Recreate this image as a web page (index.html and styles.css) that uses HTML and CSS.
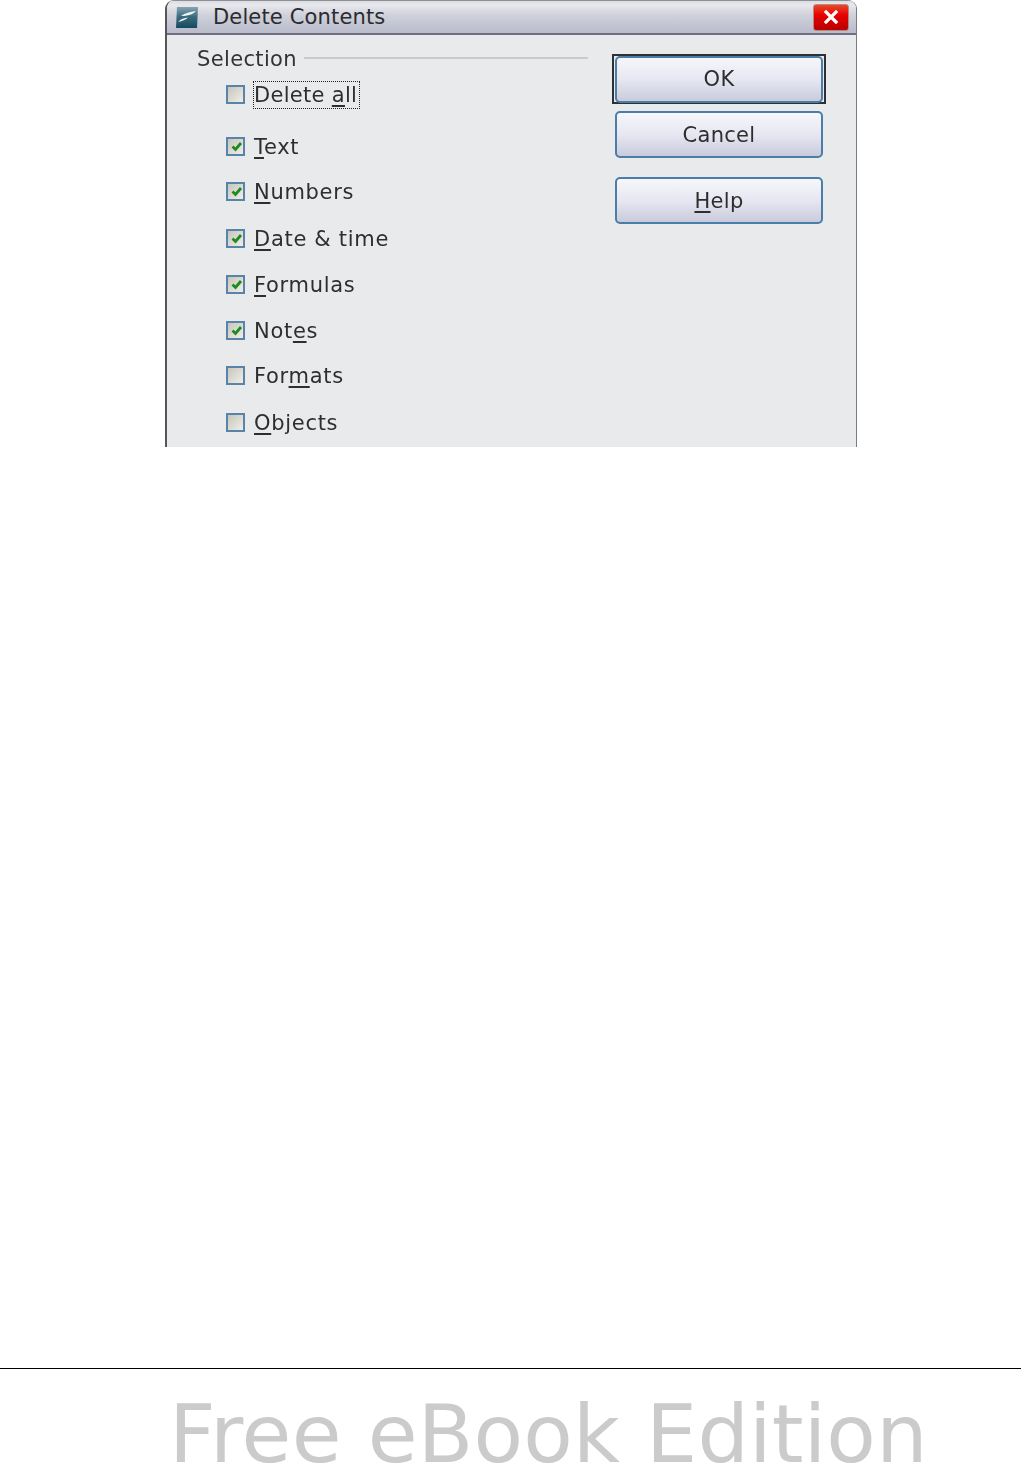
FILE: index.html
```html
<!DOCTYPE html>
<html lang="en">
<head>
<meta charset="utf-8">
<title>Delete Contents</title>
<link rel="stylesheet" href="styles.css">
</head>
<body>
<div class="page">
  <section class="dialog">
    <header class="titlebar">
      <svg class="app-icon" width="24" height="24" viewBox="0 0 24 24">
        <defs><linearGradient id="ai" x1="0" y1="0" x2="0" y2="1"><stop offset="0" stop-color="#8aa3b0"/><stop offset="0.45" stop-color="#3a6c80"/><stop offset="1" stop-color="#154a5e"/></linearGradient></defs>
        <path d="M2 2 H23 L22 23 H1 Z" fill="url(#ai)"/>
        <path d="M6 11 C10 8 15 7 21 6 C18 9 15 10 12 10.5 C10 11 8 11 6 11 Z" fill="#eef3f5"/>
        <path d="M3 17 C6 14 9 13 13 12.5 C11 15 7 16 3 17 Z" fill="#eef3f5"/>
      </svg>
      <h1 class="title">Delete Contents</h1>
      <button class="close" type="button" aria-label="Close">
        <svg width="16" height="16" viewBox="0 0 16 16"><path d="M3 3 L13 13 M13 3 L3 13" stroke="#fff" stroke-width="3.2" stroke-linecap="square"/></svg>
      </button>
    </header>
    <div class="content">
      <div class="options">
        <div class="legend"><span class="legend-text">Selection</span><span class="legend-rule"></span></div>
        <ul class="checks">
          <li class="check first"><span class="box"></span><span class="label focused">Delete <u>a</u>ll</span></li>
          <li class="check"><span class="box on"><svg width="14" height="14" viewBox="0 0 14 14"><path d="M3.5 7.5 L6.5 10.5 L12 4" fill="none" stroke="#1f8a1f" stroke-width="2.8"/></svg></span><span class="label"><u>T</u>ext</span></li>
          <li class="check up"><span class="box on"><svg width="14" height="14" viewBox="0 0 14 14"><path d="M3.5 7.5 L6.5 10.5 L12 4" fill="none" stroke="#1f8a1f" stroke-width="2.8"/></svg></span><span class="label"><u>N</u>umbers</span></li>
          <li class="check"><span class="box on"><svg width="14" height="14" viewBox="0 0 14 14"><path d="M3.5 7.5 L6.5 10.5 L12 4" fill="none" stroke="#1f8a1f" stroke-width="2.8"/></svg></span><span class="label"><u>D</u>ate &amp; time</span></li>
          <li class="check"><span class="box on"><svg width="14" height="14" viewBox="0 0 14 14"><path d="M3.5 7.5 L6.5 10.5 L12 4" fill="none" stroke="#1f8a1f" stroke-width="2.8"/></svg></span><span class="label"><u>F</u>ormulas</span></li>
          <li class="check"><span class="box on"><svg width="14" height="14" viewBox="0 0 14 14"><path d="M3.5 7.5 L6.5 10.5 L12 4" fill="none" stroke="#1f8a1f" stroke-width="2.8"/></svg></span><span class="label">Not<u>e</u>s</span></li>
          <li class="check up"><span class="box"></span><span class="label">For<u>m</u>ats</span></li>
          <li class="check"><span class="box"></span><span class="label"><u>O</u>bjects</span></li>
        </ul>
      </div>
      <div class="actions">
        <div class="default-ring"><button class="btn ok" type="button">OK</button></div>
        <button class="btn cancel" type="button">Cancel</button>
        <button class="btn help" type="button"><u>H</u>elp</button>
      </div>
    </div>
  </section>
  <footer class="footer">
    <p class="edition">Free eBook Edition</p>
  </footer>
</div>
</body>
</html>
```
FILE: styles.css
```css
html, body { margin: 0; padding: 0; background: #fff; }
body { font-family: "DejaVu Sans", sans-serif; color: #2e2e2e; overflow: hidden; }
.page { height: 1467px; display: flex; flex-direction: column; }

.dialog {
  box-sizing: border-box;
  width: 692px;
  height: 447px;
  margin-left: 165px;
  background: #e9eaec;
  border-left: 2px solid #55565c;
  border-right: 1px solid #7a7b80;
  border-radius: 9px 9px 0 0;
  overflow: hidden;
  display: flex;
  flex-direction: column;
  filter: blur(0.45px);
}
.titlebar {
  box-sizing: border-box;
  height: 35px;
  flex: none;
  display: flex;
  align-items: center;
  padding: 0 7px 0 8px;
  background: linear-gradient(#dcdde3 0, #e8e9ed 4px, #cfd1db 14px, #b9bbcc 100%);
  border-top: 1px solid #8f9096;
  border-bottom: 2px solid #6d6e7e;
}
.app-icon { flex: none; }
.title { margin: 0 0 0 14px; flex: 1; font-size: 21px; font-weight: 400; color: #2b2b2e; letter-spacing: 0.15px; }
.close {
  box-sizing: border-box;
  width: 36px; height: 27px;
  padding: 0;
  display: flex; align-items: center; justify-content: center;
  background: linear-gradient(#e84a2a, #e80000 40%, #b80000);
  border: 1px solid #b58a80;
  border-radius: 3px;
}

.content { flex: 1; display: flex; padding-top: 10px; }
.options { width: 445px; flex: none; padding-left: 30px; box-sizing: border-box; }
.legend { display: flex; align-items: center; height: 27px; width: 391px; margin-bottom: 6px; }
.legend-text { font-size: 21px; letter-spacing: 0.35px; color: #333; }
.legend-rule { flex: 1; height: 2px; margin: 0 0 2px 7px; background: #c9cacc; }

.checks { list-style: none; margin: 0; padding: 0 0 0 29px; }
.check { height: 46px; display: flex; align-items: center; font-size: 21px; letter-spacing: 0.7px; }
.check.first { height: 32px; margin-bottom: 14px; }
.check.up { margin: -1px 0 1px; }
.box {
  box-sizing: border-box;
  width: 19px; height: 19px;
  flex: none;
  margin-top: -2px;
  display: flex; align-items: center; justify-content: center;
  border: 2px solid #5884ab;
  background: linear-gradient(135deg, #c6c6bc, #efefe8);
}
.first .box { margin-top: 0; }
.label { margin-left: 9px; line-height: 26px; }
.focused { outline: 1px dotted #222; margin-top: 2px; padding-right: 2px; letter-spacing: 0.3px; }
u { text-decoration-thickness: 2px; text-underline-offset: 3px; }

.actions { width: 214px; display: flex; flex-direction: column; align-items: center; padding-top: 9px; }
.default-ring { box-sizing: border-box; width: 214px; height: 50px; border: 2px solid #2f3033; padding: 0 1px; display: flex; }
.btn {
  box-sizing: border-box;
  width: 208px; height: 47px;
  padding: 0;
  flex: none;
  font: 400 21px "DejaVu Sans", sans-serif;
  letter-spacing: 0.3px;
  color: #2e2e2e;
  background: linear-gradient(#f6f6fb, #e6e7f1 50%, #c9cbdc);
  border: 2px solid #4a7ea8;
  border-radius: 5px;
}
.ok { padding-bottom: 2px; }
.cancel { margin-top: 7px; }
.help { margin-top: 19px; }

.footer { margin-top: auto; height: 99px; box-sizing: border-box; border-top: 1px solid #000; }
.edition { margin: 0; padding: 35px 0 0 169px; font-size: 81px; line-height: 60px; letter-spacing: 0.2px; color: #cbcbcb; white-space: nowrap; filter: blur(0.5px); }
```
